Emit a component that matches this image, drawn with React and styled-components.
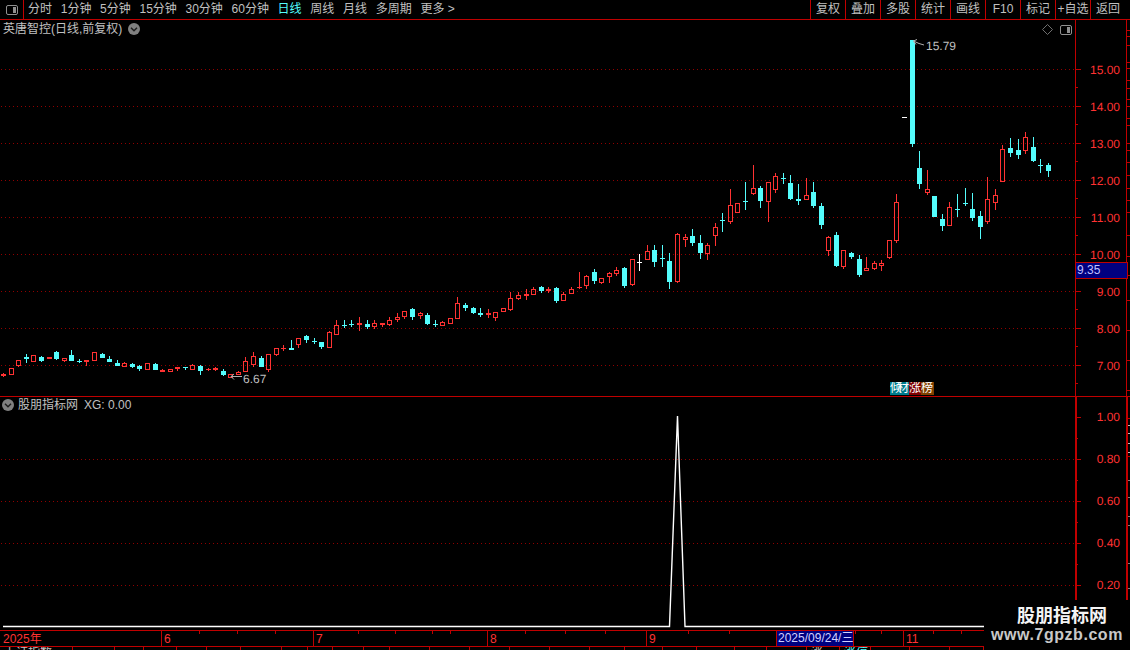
import React from 'react';
import styled, { createGlobalStyle } from 'styled-components';

const RED_LINE = '#c00000';
const RED_TEXT = '#ff3232';
const CYAN = '#54fcfc';
const GREY_TEXT = '#c0c0c0';
const FONT = '"Liberation Sans", "Noto Sans CJK SC", sans-serif';

// kind: r hollow red, R solid red, c cyan, w white; body top/bottom, wick top/bottom (page pixels)
const CANDLES = [
  ['R',374,376,373,377],['r',368,375,368,375],['r',360,366,360,367],['c',357,359,354,363],['r',355,362,355,362],
  ['c',357,361,356,362],['R',357,359,357,359],['c',352,359,351,360],['r',358,361,358,362],['c',355,361,350,361],
  ['c',361,362,359,363],['r',360,362,360,366],['r',352,361,352,361],['c',354,358,353,358],['c',359,362,356,362],
  ['c',363,366,360,366],['r',363,367,362,367],['c',364,367,363,368],['c',366,369,365,371],['r',363,370,363,370],
  ['c',364,370,363,370],['R',370,372,369,372],['r',369,372,369,372],['R',367,369,367,371],['c',367,368,367,370],
  ['r',365,370,364,370],['c',366,371,365,375],['R',369,370,368,371],['R',368,370,367,371],['c',371,375,369,376],
  ['r',374,378,374,378],['r',372,375,371,375],['r',361,372,357,372],['r',356,365,352,367],['c',358,367,356,367],
  ['r',354,370,354,372],['r',348,355,348,356],['R',348,349,345,351],['c',348,350,340,350],['r',338,345,338,348],
  ['c',336,340,335,343],['c',341,342,338,344],['c',342,347,342,349],['r',332,348,331,348],['r',325,335,320,335],
  ['c',325,326,320,328],['c',324,325,320,327],['R',323,325,317,331],['c',324,327,320,329],['r',323,327,320,329],
  ['r',323,325,323,327],['r',320,325,317,326],['r',317,320,313,322],['r',311,317,311,319],['c',309,317,308,320],
  ['r',313,316,312,319],['c',315,324,313,325],['c',324,325,320,327],['r',322,326,321,326],['r',318,324,318,324],
  ['r',303,319,297,319],['c',305,308,303,311],['c',308,313,307,314],['c',313,315,308,317],['R',313,315,309,318],
  ['r',312,318,312,321],['r',308,312,308,312],['r',298,310,292,311],['r',295,299,292,300],['R',294,296,289,300],
  ['r',289,295,287,295],['c',287,291,286,293],['R',289,291,287,293],['c',288,301,287,303],['r',294,301,292,301],
  ['r',289,294,287,294],['R',287,288,272,289],['r',276,286,275,289],['c',272,281,269,284],['r',278,283,278,284],
  ['r',273,277,272,283],['r',270,274,267,276],['c',268,286,267,288],['r',259,285,259,286],['w',262,263,254,271],
  ['r',251,260,245,260],['c',250,262,245,267],['c',258,259,245,267],['c',261,282,253,289],['r',234,282,233,283],
  ['r',237,240,234,247],['c',236,243,229,246],['c',243,253,235,259],['r',245,254,243,260],['r',227,236,223,246],
  ['c',220,221,213,232],['r',205,222,189,224],['r',203,213,203,213],['c',201,202,182,210],['r',188,194,165,195],
  ['c',188,201,186,208],['r',182,202,182,222],['r',176,190,173,193],['c',178,179,173,184],['c',183,199,175,200],
  ['c',199,201,184,205],['r',195,200,178,200],['c',192,206,182,208],['c',206,225,203,229],['r',237,251,236,256],
  ['c',235,266,232,267],['r',250,267,250,269],['c',253,257,252,259],['c',259,275,255,277],['r',268,271,257,271],
  ['r',263,269,261,270],['r',263,266,260,271],['r',240,258,240,259],['r',202,241,194,243],['w',117,118,117,118],
  ['c',40,144,40,147],['c',168,184,151,189],['r',189,193,170,195],['c',196,217,196,217],['c',219,226,214,231],
  ['r',207,226,202,226],['c',209,210,194,217],['c',203,204,188,206],['c',209,218,193,221],['c',216,227,211,239],
  ['r',199,222,177,224],['r',195,203,189,210],['r',149,182,145,182],['c',148,153,138,157],['c',150,155,139,159],
  ['r',137,151,132,154],['c',147,161,137,162],['c',165,166,159,173],['c',165,171,163,177],
];

const PRICE_LEVELS = [15, 14, 13, 12, 11, 10, 9, 8, 7];
const PRICE_Y = (p) => 69 + (15 - p) * 37;
const RATIO_LEVELS = ['1.00', '0.80', '0.60', '0.40', '0.20'];
const RATIO_Y = (i) => 417 + i * 42;
const PERIODS = ['分时', '1分钟', '5分钟', '15分钟', '30分钟', '60分钟', '日线', '周线', '月线', '多周期'];
const ACTIONS = ['复权', '叠加', '多股', '统计', '画线', 'F10', '标记', '+自选', '返回'];
const UPPER_TICKS = [30, 36, 45, 62, 68, 80, 88, 99, 106, 118, 125, 143, 150, 162, 175, 188, 200, 212, 235, 256, 275, 300, 330, 360, 390];
const LOWER_TICKS = [
  [418, RED_LINE], [425, GREY_TEXT], [433, GREY_TEXT], [443, GREY_TEXT], [452, GREY_TEXT], [456, RED_LINE],
  [480, '#808080'], [497, '#808080'], [516, '#808080'], [525, '#808080'], [563, '#808080'], [588, '#808080'],
];
const STATUS_STOPS = [42, 73, 115, 144, 177, 207, 241, 282, 308, 333, 364, 390, 430, 470, 510, 550, 590, 625, 663, 697, 735, 767, 807, 840, 871, 910, 950, 984];
const STATUS_TEXT = { 0: '上证指数', 23: '涨', 24: '涨停' };
const AXIS_TICKS = [199, 237, 275, 358, 395, 432, 450, 525, 565, 605, 688, 729, 855, 881, 933, 961];

const GlobalStyle = createGlobalStyle`
  html, body {
    margin: 0;
    background: #000;
    overflow: hidden;
  }
`;

const Page = styled.div`
  position: relative;
  width: 1130px;
  height: 650px;
  background: #000;
  font-family: ${FONT};
  font-size: 12px;
  color: ${GREY_TEXT};
  overflow: hidden;
`;

const Toolbar = styled.div`
  display: flex;
  align-items: center;
  height: 19px;
  border-bottom: 1px solid ${RED_LINE};
`;

const LeftToggle = styled.div`
  display: flex;
  align-items: center;
  justify-content: center;
  width: 23px;
  height: 100%;
  border-right: 1px solid ${RED_LINE};
`;

const PeriodList = styled.div`
  display: flex;
  gap: 8.7px;
  margin-left: 4px;
`;

const PeriodItem = styled.span`
  line-height: 19px;
  white-space: nowrap;
  color: ${(p) => (p.$active ? CYAN : GREY_TEXT)};
`;

const ActionList = styled.div`
  display: flex;
  height: 100%;
  margin-left: auto;
  padding-right: 5px;
`;

const ActionButton = styled.div`
  width: 35px;
  text-align: center;
  line-height: 19px;
  white-space: nowrap;
  border-left: 1px solid ${RED_LINE};
  box-sizing: border-box;
`;

const Pane = styled.div`
  position: relative;
  display: flex;
  height: ${(p) => p.$height}px;
`;

const PricePane = styled(Pane)`
  border-bottom: 1px solid ${RED_LINE};
`;

const Legend = styled.div`
  position: absolute;
  left: ${(p) => p.$left}px;
  top: ${(p) => p.$top}px;
  display: flex;
  align-items: center;
  gap: ${(p) => p.$gap}px;
  line-height: 16px;
  white-space: nowrap;
`;

const LegendValue = styled.span`
  margin-left: 2px;
`;

const CornerIcons = styled.div`
  position: absolute;
  left: 1042px;
  top: 4px;
  display: flex;
  align-items: center;
  gap: 7px;
`;

const Badge = styled.div`
  position: absolute;
  left: 890px;
  top: 362px;
  display: flex;
  height: 13px;
  line-height: 13px;
  color: #fff;
`;

const BadgeTile = styled.span`
  width: ${(p) => p.$width}px;
  letter-spacing: ${(p) => p.$spacing || 0}px;
  background: ${(p) => p.$color};
  overflow: hidden;
  white-space: nowrap;
`;

const PriceTag = styled.div`
  position: absolute;
  left: 1075px;
  top: 242px;
  width: 50px;
  height: 15px;
  padding-left: 1px;
  border: 1px solid ${RED_LINE};
  background: #000080;
  color: #c0c0ff;
  line-height: 15px;
`;

const Chart = styled.svg`
  display: block;
  flex: none;
  shape-rendering: crispEdges;
`;

const ChartText = styled.text`
  font-family: ${FONT};
  font-size: 12px;
  fill: ${(p) => p.$color};
  text-rendering: geometricPrecision;
`;

const TimeAxis = styled.div`
  position: relative;
  display: flex;
  height: 15px;
  border-top: 1px solid ${RED_LINE};
  border-bottom: 1px solid ${RED_LINE};
`;

const MonthCell = styled.div`
  width: ${(p) => p.$width}px;
  padding-left: ${(p) => (p.$plain ? 3 : 2)}px;
  box-sizing: border-box;
  flex: none;
  line-height: 16px;
  color: ${RED_TEXT};
  border-left: ${(p) => (p.$plain ? 'none' : `1px solid ${RED_LINE}`)};
`;

const DateCell = styled.div`
  flex: none;
  width: 78px;
  padding-left: 1px;
  box-sizing: border-box;
  line-height: 15px;
  white-space: nowrap;
  color: #d0d0ff;
  background: #000080;
  border-left: 1px solid ${RED_LINE};
  border-right: 1px solid ${RED_LINE};
`;

const AxisTicks = styled.svg`
  position: absolute;
  left: 0;
  top: 0;
  shape-rendering: crispEdges;
`;

const StatusRow = styled.div`
  display: flex;
  height: 3px;
  overflow: hidden;
`;

const StatusCell = styled.div`
  flex: none;
  width: ${(p) => p.$width}px;
  box-sizing: border-box;
  padding-left: 4px;
  line-height: 13px;
  color: ${(p) => (p.$accent ? CYAN : GREY_TEXT)};
  border-right: 1px solid ${RED_LINE};
  white-space: nowrap;
`;

const Watermark = styled.div`
  position: absolute;
  right: 0;
  bottom: 0;
  width: 146px;
  height: 50px;
  display: flex;
  flex-direction: column;
  align-items: center;
  background: #000;
`;

const WatermarkTitle = styled.div`
  margin: 6px 0 0 10px;
  font-size: 18px;
  font-weight: 700;
  line-height: 20px;
  color: #f4f4f4;
`;

const WatermarkUrl = styled.div`
  font-size: 16px;
  line-height: 17px;
  font-weight: 700;
  letter-spacing: 0.55px;
  color: #c8c8c8;
`;

const ToggleIcon = ({ width = 12, height = 10 }) => (
  <svg width={width} height={height} viewBox="0 0 12 10">
    <rect x="0.5" y="0.5" width="11" height="9" rx="1.5" fill="none" stroke="#909090" />
    <rect x="7" y="2" width="3" height="6" fill="#909090" />
  </svg>
);

const ChevronBadge = () => (
  <svg width="12" height="12" viewBox="0 0 12 12">
    <circle cx="6" cy="6" r="6" fill="#808080" />
    <path d="M3 4.8 L6 7.8 L9 4.8" fill="none" stroke="#1c1c1c" strokeWidth="1.4" />
  </svg>
);

const DiamondIcon = () => (
  <svg width="11" height="11" viewBox="0 0 11 11">
    <path d="M5.5 0.5 L10.5 5.5 L5.5 10.5 L0.5 5.5 Z" fill="none" stroke="#707070" />
  </svg>
);

const Candle = ({ data, index }) => {
  const [kind, top, bottom, wickTop, wickBottom] = data;
  const x = Math.floor(3.7 + 7.57 * index);
  const color = kind === 'c' ? CYAN : kind === 'w' ? '#fff' : RED_TEXT;

  if (kind === 'r') {
    return (
      <g stroke={color} fill="none">
        {wickTop < top && <line x1={x + 0.5} x2={x + 0.5} y1={wickTop} y2={top} />}
        {wickBottom > bottom && <line x1={x + 0.5} x2={x + 0.5} y1={bottom} y2={wickBottom} />}
        <rect x={x - 1.5} y={top + 0.5} width={4} height={bottom - top - 1} />
      </g>
    );
  }

  return (
    <g fill={color}>
      <rect x={x} y={wickTop} width={1} height={wickBottom - wickTop} />
      <rect x={x - 2} y={top} width={5} height={bottom - top} />
    </g>
  );
};

const GridLines = ({ rows }) =>
  rows.map((y) => (
    <line key={y} x1="1" x2="1075" y1={y + 0.5} y2={y + 0.5} stroke="#900000" strokeDasharray="1 3" />
  ));

const PriceChart = () => (
  <Chart width="1075" height="376" viewBox="0 20 1075 376">
    <GridLines rows={PRICE_LEVELS.map(PRICE_Y)} />
    {CANDLES.map((c, i) => (
      <Candle key={i} data={c} index={i} />
    ))}
    <g stroke="#b0b0b0" fill="none" style={{ shapeRendering: 'auto' }}>
      <path d="M913.5 41 L919 43.5 L924 45" />
      <path d="M917 39.5 L913.5 41 L916 44.5" />
      <path d="M231 376.5 H242" />
      <path d="M234 374 L231 376.5 L234 379.5" />
    </g>
    <ChartText x="926" y="50" $color={GREY_TEXT}>15.79</ChartText>
    <ChartText x="243" y="383" $color={GREY_TEXT}>6.67</ChartText>
  </Chart>
);

const PriceAxis = () => (
  <Chart width="55" height="376" viewBox="1075 20 55 376">
    <rect x="1075" y="20" width="1" height="376" fill={RED_LINE} />
    <rect x="1126" y="20" width="1" height="376" fill={RED_LINE} />
    {UPPER_TICKS.map((y) => (
      <rect key={y} x="1127" y={y} width="3" height="1" fill={RED_LINE} />
    ))}
    {PRICE_LEVELS.map((p) => (
      <g key={p}>
        <rect x="1075" y={PRICE_Y(p)} width="6" height="1" fill={RED_LINE} />
        <rect x="1075" y={PRICE_Y(p) + 18} width="3" height="1" fill={RED_LINE} />
        <ChartText x="1120" y={PRICE_Y(p) + 5} textAnchor="end" $color={RED_TEXT}>
          {p.toFixed(2)}
        </ChartText>
      </g>
    ))}
  </Chart>
);

const IndicatorChart = () => (
  <Chart width="1075" height="233" viewBox="0 397 1075 233">
    <GridLines rows={[459, 501, 543, 585]} />
    <polyline
      points="3,626.5 669.5,626.5 677.5,416 685,626.5 1075,626.5"
      fill="none"
      stroke="#fff"
      strokeWidth="1.4"
      style={{ shapeRendering: 'auto' }}
    />
  </Chart>
);

const IndicatorAxis = () => (
  <Chart width="55" height="233" viewBox="1075 397 55 233">
    <rect x="1075" y="397" width="2" height="233" fill={RED_LINE} />
    <rect x="1126" y="397" width="2" height="233" fill={RED_LINE} />
    {LOWER_TICKS.map(([y, color]) => (
      <rect key={y} x="1128" y={y} width="2" height="1" fill={color} />
    ))}
    {RATIO_LEVELS.map((label, i) => (
      <g key={label}>
        <rect x="1075" y={RATIO_Y(i)} width="6" height="1" fill={RED_LINE} />
        <rect x="1075" y={RATIO_Y(i) + 21} width="3" height="1" fill={RED_LINE} />
        <ChartText x="1120" y={RATIO_Y(i) + 4} textAnchor="end" $color={RED_TEXT}>
          {label}
        </ChartText>
      </g>
    ))}
  </Chart>
);

const App = () => (
  <Page>
    <GlobalStyle />
    <Toolbar>
      <LeftToggle>
        <ToggleIcon />
      </LeftToggle>
      <PeriodList>
        {PERIODS.map((name) => (
          <PeriodItem key={name} $active={name === '日线'}>
            {name}
          </PeriodItem>
        ))}
        <PeriodItem>更多 &gt;</PeriodItem>
      </PeriodList>
      <ActionList>
        {ACTIONS.map((name) => (
          <ActionButton key={name}>{name}</ActionButton>
        ))}
      </ActionList>
    </Toolbar>

    <PricePane $height={376}>
      <PriceChart />
      <PriceAxis />
      <Legend $left={3} $top={1} $gap={6}>
        <span>英唐智控(日线,前复权)</span>
        <ChevronBadge />
      </Legend>
      <CornerIcons>
        <DiamondIcon />
        <ToggleIcon />
      </CornerIcons>
      <Badge>
        <BadgeTile $width={19} $spacing={-5} $color="#007b8b">倾材</BadgeTile>
        <BadgeTile $width={12} $color="#800000">涨</BadgeTile>
        <BadgeTile $width={13} $color="#804000">榜</BadgeTile>
      </Badge>
      <PriceTag>9.35</PriceTag>
    </PricePane>

    <Pane $height={233}>
      <IndicatorChart />
      <IndicatorAxis />
      <Legend $left={2} $top={0} $gap={4}>
        <ChevronBadge />
        <span>股朋指标网</span>
        <LegendValue>XG: 0.00</LegendValue>
      </Legend>
    </Pane>

    <TimeAxis>
      <MonthCell $width={161} $plain>2025年</MonthCell>
      <MonthCell $width={152}>6</MonthCell>
      <MonthCell $width={174}>7</MonthCell>
      <MonthCell $width={159}>8</MonthCell>
      <MonthCell $width={130}>9</MonthCell>
      <DateCell>2025/09/24/三</DateCell>
      <MonthCell $width={49} $plain />
      <MonthCell $width={227}>11</MonthCell>
      <AxisTicks width="1130" height="4">
        {AXIS_TICKS.map((x) => (
          <rect key={x} x={x} y="0" width="1" height="3" fill={RED_LINE} />
        ))}
      </AxisTicks>
    </TimeAxis>

    <StatusRow>
      {STATUS_STOPS.map((stop, i) => (
        <StatusCell key={stop} $width={stop - (i ? STATUS_STOPS[i - 1] : 0)} $accent={i === 24}>
          {STATUS_TEXT[i]}
        </StatusCell>
      ))}
    </StatusRow>

    <Watermark>
      <WatermarkTitle>股朋指标网</WatermarkTitle>
      <WatermarkUrl>www.7gpzb.com</WatermarkUrl>
    </Watermark>
  </Page>
);

export default App;
